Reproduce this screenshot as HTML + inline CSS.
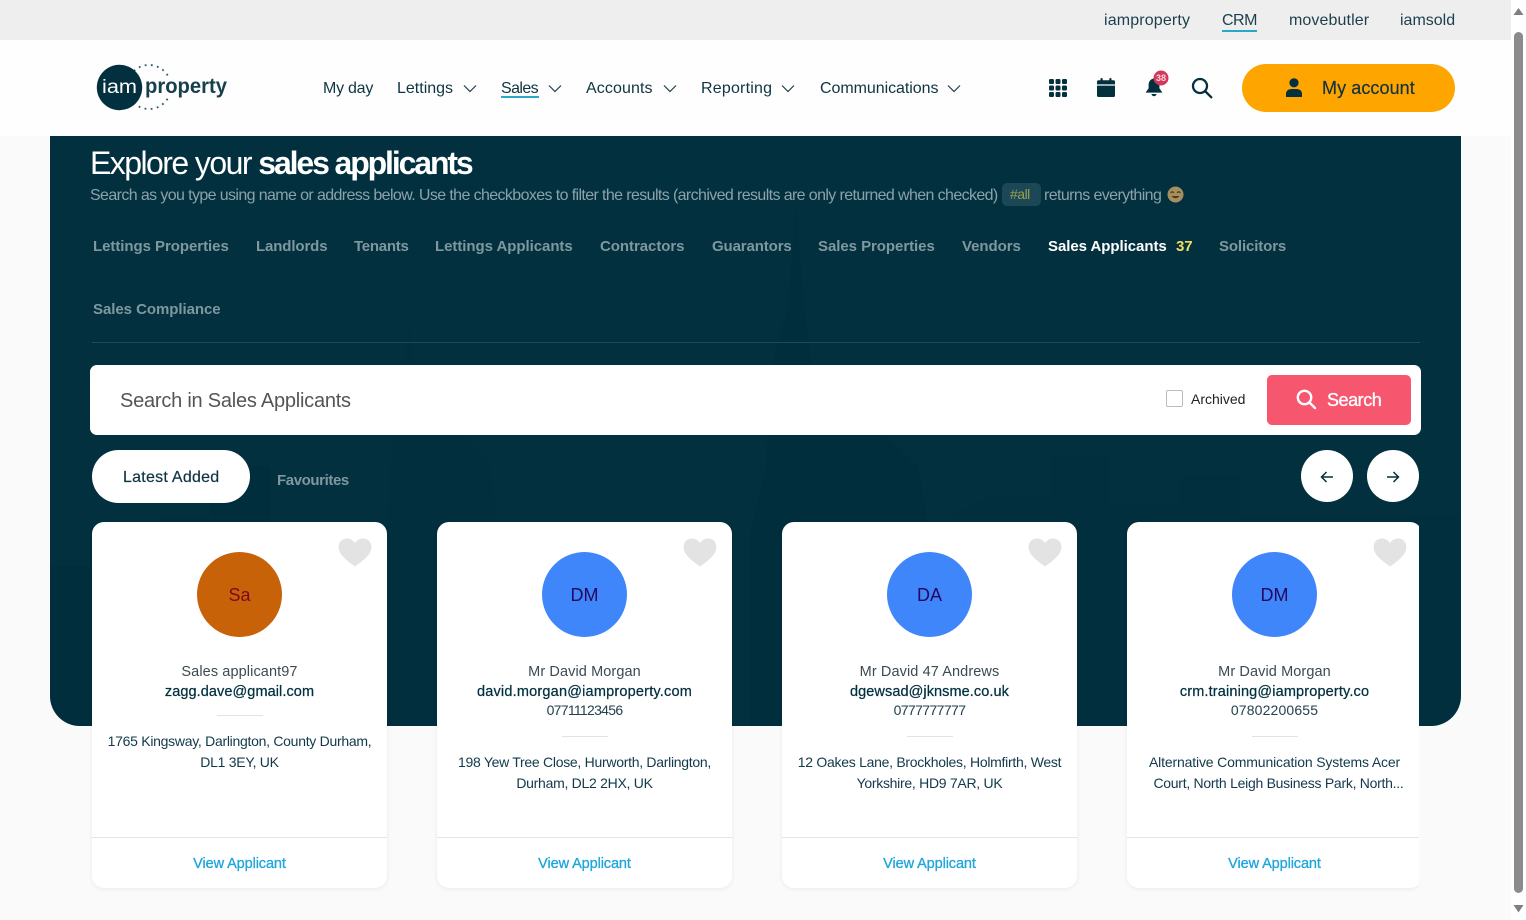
<!DOCTYPE html>
<html lang="en">
<head>
<meta charset="utf-8">
<title>Explore your sales applicants</title>
<style>
*{box-sizing:border-box}
html,body{margin:0;padding:0;width:1526px;height:920px;overflow:hidden;background:#fafafa}
body{font-family:"Liberation Sans",Arial,sans-serif;color:#02303f;position:relative}
.a{position:absolute;white-space:nowrap}
#top{left:0;top:0;width:1511px;height:40px;background:#eeeeee}
#head{left:0;top:40px;width:1511px;height:96px;background:#fefefe}
.t{top:11px;font-size:16px;line-height:20px;color:#1d3f4c}
.n{top:79px;font-size:16px;line-height:20px;color:#0f3542}
.chev{position:absolute;top:84px;width:14px;height:9px}
#panel{left:50px;top:136px;width:1411px;height:590px;background:#02303f;border-radius:0 0 30px 30px;overflow:hidden}
.tab{font-size:15px;line-height:20px;font-weight:700;color:#7f989f;letter-spacing:-.05px}
.card{position:absolute;top:522px;width:295px;height:366px;background:#fff;border-radius:12px;box-shadow:0 1px 5px rgba(0,0,0,.07);overflow:hidden;text-align:center}
.ava{position:absolute;left:105px;top:31px;width:85px;height:85px;border-radius:50%;font-size:18px;line-height:85px;text-align:center}
.avab{position:absolute;left:105px;top:30px;width:85px;height:85px;border-radius:50%}
.l{position:absolute;left:0;width:295px;font-size:14.5px;line-height:19px;white-space:nowrap}
.nm{top:141px;color:#3c4a52;letter-spacing:.1px}
.em{top:160.5px;color:#02303f;-webkit-text-stroke:.25px #02303f;letter-spacing:.08px}
.ph{top:179px;color:#23414d;font-size:14px}
.sep{position:absolute;left:125px;width:46px;height:1px;background:#e2e2e2}
.ad{font-size:14px;line-height:21px;color:#12394a;letter-spacing:-.28px}
.foot{position:absolute;left:0;top:315px;width:295px;height:1px;background:#e4e4e4}
.view{position:absolute;left:0;top:332px;width:295px;font-size:14.5px;line-height:20px;color:#1ea5dc;-webkit-text-stroke:.3px #1ea5dc;letter-spacing:-.1px}
.heart{position:absolute;left:246px;top:16px;width:34px;height:29px}
.circ{position:absolute;top:450px;width:52px;height:52px;border-radius:50%;background:#fff}
</style>
</head>
<body>
<div class="a" id="top"></div>
<div class="a" id="head"></div>

<span class="a t" style="left:1104px;letter-spacing:.15px">iamproperty</span>
<span class="a t" style="left:1222px;letter-spacing:-.5px">CRM</span>
<div class="a" style="left:1222px;top:30px;width:35px;height:2px;background:#2aa9c6"></div>
<span class="a t" style="left:1289px;letter-spacing:.1px">movebutler</span>
<span class="a t" style="left:1400px">iamsold</span>

<!-- logo -->
<svg class="a" style="left:90px;top:58px" width="145" height="58" viewBox="0 0 145 58">
  <circle cx="59" cy="29" r="22" fill="none" stroke="#2f5a67" stroke-width="1.8" stroke-dasharray="1.8 4.4"/>
  <rect x="54" y="20" width="85" height="20" fill="#fefefe"/>
  <circle cx="29.5" cy="29.5" r="22.7" fill="#02303f"/>
  <text x="12" y="35" font-family="Liberation Sans" font-size="19" fill="#fff" textLength="35" lengthAdjust="spacingAndGlyphs">iam</text>
  <text x="55" y="35" font-family="Liberation Sans" font-size="21" font-weight="700" fill="#17404d" textLength="82" lengthAdjust="spacingAndGlyphs">property</text>
</svg>

<span class="a n" style="left:323px;letter-spacing:-.25px">My day</span>
<span class="a n" style="left:397px">Lettings</span>
<svg class="chev" style="left:463px" viewBox="0 0 14 9"><path d="M1 1.5 7 7.5 13 1.5" fill="none" stroke="#1d3f4c" stroke-width="1.2"/></svg>
<span class="a n" style="left:501px;letter-spacing:-.6px">Sales</span>
<div class="a" style="left:501px;top:96px;width:38px;height:2px;background:#2aa9c6"></div>
<svg class="chev" style="left:548px" viewBox="0 0 14 9"><path d="M1 1.5 7 7.5 13 1.5" fill="none" stroke="#1d3f4c" stroke-width="1.2"/></svg>
<span class="a n" style="left:586px;letter-spacing:.1px">Accounts</span>
<svg class="chev" style="left:663px" viewBox="0 0 14 9"><path d="M1 1.5 7 7.5 13 1.5" fill="none" stroke="#1d3f4c" stroke-width="1.2"/></svg>
<span class="a n" style="left:701px;letter-spacing:.2px">Reporting</span>
<svg class="chev" style="left:781px" viewBox="0 0 14 9"><path d="M1 1.5 7 7.5 13 1.5" fill="none" stroke="#1d3f4c" stroke-width="1.2"/></svg>
<span class="a n" style="left:820px;letter-spacing:-.05px">Communications</span>
<svg class="chev" style="left:947px" viewBox="0 0 14 9"><path d="M1 1.5 7 7.5 13 1.5" fill="none" stroke="#1d3f4c" stroke-width="1.2"/></svg>

<!-- header icons -->
<svg class="a" style="left:1049px;top:79px" width="18" height="18" viewBox="0 0 18 18" fill="#02303f">
  <rect x="0" y="0" width="5" height="5" rx="1.4"/><rect x="6.5" y="0" width="5" height="5" rx="1.4"/><rect x="13" y="0" width="5" height="5" rx="1.4"/>
  <rect x="0" y="6.5" width="5" height="5" rx="1.4"/><rect x="6.5" y="6.5" width="5" height="5" rx="1.4"/><rect x="13" y="6.5" width="5" height="5" rx="1.4"/>
  <rect x="0" y="13" width="5" height="5" rx="1.4"/><rect x="6.5" y="13" width="5" height="5" rx="1.4"/><rect x="13" y="13" width="5" height="5" rx="1.4"/>
</svg>
<svg class="a" style="left:1097px;top:78px" width="18" height="20" viewBox="0 0 18 20" fill="#02303f">
  <rect x="3.5" y="0" width="2.2" height="4" rx="1"/><rect x="12.3" y="0" width="2.2" height="4" rx="1"/>
  <path d="M1.5 2.2H16.5A1.5 1.5 0 0 1 18 3.7V6.4H0V3.7A1.5 1.5 0 0 1 1.5 2.2Z"/>
  <path d="M0 7.6H18V17.5A1.5 1.5 0 0 1 16.5 19H1.5A1.5 1.5 0 0 1 0 17.5Z"/>
</svg>
<svg class="a" style="left:1143px;top:70px" width="28" height="28" viewBox="0 0 28 28">
  <path d="M11 8.5C7.3 9 5.6 11.8 5.6 15V18.2L2.6 22.6H19.4L16.4 18.2V15C16.4 11.8 14.7 9 11 8.5Z" fill="#02303f"/>
  <path d="M8.5 24H13.5A2.5 2.2 0 0 1 8.5 24Z" fill="#02303f"/>
  <circle cx="18" cy="8" r="7.5" fill="#d4375b"/>
  <text x="18" y="11" font-family="Liberation Sans" font-size="9" font-weight="700" fill="#f6d7de" text-anchor="middle">38</text>
</svg>
<svg class="a" style="left:1191px;top:77px" width="22" height="22" viewBox="0 0 22 22" fill="none" stroke="#02303f" stroke-width="2.3">
  <circle cx="9" cy="9" r="7"/><path d="M14 14 20.3 20.3" stroke-linecap="round"/>
</svg>

<!-- account -->
<div class="a" style="left:1242px;top:64px;width:213px;height:48px;border-radius:24px;background:#fea500"></div>
<svg class="a" style="left:1285px;top:78px" width="18" height="20" viewBox="0 0 18 20" fill="#02303f">
  <circle cx="9" cy="4.8" r="4.6"/><path d="M1 19V16C1 12.8 3.6 11 6.5 11H11.5C14.4 11 17 12.8 17 16V19Z"/>
</svg>
<span class="a" style="left:1322px;top:78px;font-size:18px;line-height:20px;color:#12333d;-webkit-text-stroke:.2px #12333d;letter-spacing:.08px">My account</span>

<!-- panel -->
<div class="a" id="panel">
<svg style="position:absolute;left:0;top:0" width="1411" height="590" viewBox="0 0 1411 590" fill="#012b39">
  <path d="M746 70 L738 170 L722 230 L716 330 L700 400 L700 590 L890 590 L880 400 L868 330 L762 230 L754 170Z" opacity=".3"/>
  <path d="M358 180 L354 240 L340 330 L330 590 L470 590 L440 330 L366 240Z" opacity=".25"/>
  <path d="M0 430H40V400H60V430H110V380H160V330H220V590H0Z" opacity=".35"/>
  <path d="M940 360H1000V320H1060V370H1130V340H1190V380H1411V590H900V380Z" opacity=".2"/>
</svg>
</div>

<div class="a" style="left:90px;top:145px;font-size:32px;line-height:36px;color:#fff;letter-spacing:-1.56px">Explore your <b style="letter-spacing:-2.12px">sales applicants</b></div>
<div class="a" style="left:90px;top:186px;font-size:16px;line-height:20px;color:#8ba2a9;letter-spacing:-.615px">Search as you type using name or address below. Use the checkboxes to filter the results (archived results are only returned when checked)</div>
<div class="a" style="left:1002px;top:183px;width:39px;height:23px;border-radius:5px;background:#1b4756"></div>
<span class="a" style="left:1010px;top:184px;font-size:14px;line-height:20px;color:#98a04f;letter-spacing:-.5px">#all</span>
<span class="a" style="left:1044px;top:186px;font-size:16px;line-height:20px;color:#8ba2a9;letter-spacing:-.6px">returns everything</span>
<svg class="a" style="left:1167px;top:186px" width="17" height="17" viewBox="0 0 17 17">
  <circle cx="8.5" cy="8.5" r="8" fill="#a68f5c"/><path d="M3.5 6.8Q5.3 5 7 6.8M10 6.8Q11.7 5 13.5 6.8" fill="none" stroke="#3b3a2c" stroke-width="1.2"/><path d="M4.5 10Q8.5 14.5 12.5 10Z" fill="#4c3a27"/>
</svg>

<span class="a tab" style="left:93px;top:237px">Lettings Properties</span>
<span class="a tab" style="left:256px;top:237px;letter-spacing:-.12px">Landlords</span>
<span class="a tab" style="left:354px;top:237px;letter-spacing:-.25px">Tenants</span>
<span class="a tab" style="left:435px;top:237px">Lettings Applicants</span>
<span class="a tab" style="left:600px;top:237px">Contractors</span>
<span class="a tab" style="left:712px;top:237px;letter-spacing:-.12px">Guarantors</span>
<span class="a tab" style="left:818px;top:237px">Sales Properties</span>
<span class="a tab" style="left:962px;top:237px">Vendors</span>
<span class="a tab" style="left:1048px;top:237px;color:#fff">Sales Applicants</span>
<span class="a tab" style="left:1176px;top:237px;color:#f4dc62">37</span>
<span class="a tab" style="left:1219px;top:237px;letter-spacing:-.12px">Solicitors</span>
<span class="a tab" style="left:93px;top:300px">Sales Compliance</span>
<div class="a" style="left:92px;top:342px;width:1328px;height:1px;background:#1d4b58"></div>

<!-- search -->
<div class="a" style="left:90px;top:365px;width:1331px;height:70px;background:#fff;border-radius:7px"></div>
<span class="a" style="left:120px;top:389px;font-size:20px;line-height:24px;color:#555;letter-spacing:-.23px">Search in Sales Applicants</span>
<div class="a" style="left:1166px;top:390px;width:17px;height:17px;border:1px solid #bdbdbd;border-radius:2px;background:#fff"></div>
<span class="a" style="left:1191px;top:389px;font-size:14px;line-height:20px;color:#222">Archived</span>
<div class="a" style="left:1267px;top:375px;width:144px;height:50px;border-radius:5px;background:#f7566f"></div>
<svg class="a" style="left:1296px;top:389px" width="21" height="21" viewBox="0 0 21 21" fill="none" stroke="#fff" stroke-width="2.4">
  <circle cx="8.5" cy="8.5" r="6.7"/><path d="M13.3 13.3 19 19" stroke-linecap="round"/>
</svg>
<span class="a" style="left:1327px;top:390px;font-size:18px;line-height:20px;color:#fff;-webkit-text-stroke:.3px #fff;letter-spacing:-.45px">Search</span>

<!-- sub tabs -->
<div class="a" style="left:92px;top:450px;width:158px;height:53px;border-radius:27px;background:#fff"></div>
<span class="a" style="left:123px;top:468px;font-size:16px;line-height:20px;color:#0f3542;-webkit-text-stroke:.2px #0f3542;letter-spacing:.25px">Latest Added</span>
<span class="a tab" style="left:277px;top:471px;letter-spacing:-.4px">Favourites</span>
<div class="circ" style="left:1301px"></div>
<div class="circ" style="left:1367px"></div>
<svg class="a" style="left:1320px;top:470px" width="14" height="14" viewBox="0 0 14 14" fill="none" stroke="#02303f" stroke-width="1.5"><path d="M13 7H1.5M6.5 2 1.5 7 6.5 12"/></svg>
<svg class="a" style="left:1386px;top:470px" width="14" height="14" viewBox="0 0 14 14" fill="none" stroke="#02303f" stroke-width="1.5"><path d="M1 7H12.5M7.5 2 12.5 7 7.5 12"/></svg>

<!-- cards clip -->
<div class="a" style="left:0;top:0;width:1419px;height:920px;overflow:hidden">
  <div class="card" style="left:92px">
    <svg class="heart" viewBox="0 0 36 31"><path d="M18 30.5C6 22 .5 16.5 .5 9.5 .5 4 4.5 .5 9.5 .5 13 .5 16 2.3 18 5.3 20 2.3 23 .5 26.5 .5 31.5 .5 35.5 4 35.5 9.5 35.5 16.5 30 22 18 30.5Z" fill="#e3e3e3"/></svg>
    <div class="avab" style="background:#c86208"></div>
    <div class="ava" style="color:#7a0b1e">Sa</div>
    <div class="l nm">Sales applicant97</div>
    <div class="l em">zagg.dave@gmail.com</div>
    <div class="sep" style="top:193px"></div>
    <div class="l ad" style="top:209px">1765 Kingsway, Darlington, County Durham,<br>DL1 3EY, UK</div>
    <div class="foot"></div>
    <div class="view">View Applicant</div>
  </div>
  <div class="card" style="left:437px">
    <svg class="heart" viewBox="0 0 36 31"><path d="M18 30.5C6 22 .5 16.5 .5 9.5 .5 4 4.5 .5 9.5 .5 13 .5 16 2.3 18 5.3 20 2.3 23 .5 26.5 .5 31.5 .5 35.5 4 35.5 9.5 35.5 16.5 30 22 18 30.5Z" fill="#e3e3e3"/></svg>
    <div class="avab" style="background:#4086fb"></div>
    <div class="ava" style="color:#25085f">DM</div>
    <div class="l nm">Mr David Morgan</div>
    <div class="l em" style="letter-spacing:.2px">david.morgan@iamproperty.com</div>
    <div class="l ph" style="letter-spacing:-.7px">07711123456</div>
    <div class="sep" style="top:214px"></div>
    <div class="l ad" style="top:230px">198 Yew Tree Close, Hurworth, Darlington,<br>Durham, DL2 2HX, UK</div>
    <div class="foot"></div>
    <div class="view">View Applicant</div>
  </div>
  <div class="card" style="left:782px">
    <svg class="heart" viewBox="0 0 36 31"><path d="M18 30.5C6 22 .5 16.5 .5 9.5 .5 4 4.5 .5 9.5 .5 13 .5 16 2.3 18 5.3 20 2.3 23 .5 26.5 .5 31.5 .5 35.5 4 35.5 9.5 35.5 16.5 30 22 18 30.5Z" fill="#e3e3e3"/></svg>
    <div class="avab" style="background:#4086fb"></div>
    <div class="ava" style="color:#25085f">DA</div>
    <div class="l nm">Mr David 47 Andrews</div>
    <div class="l em">dgewsad@jknsme.co.uk</div>
    <div class="l ph" style="letter-spacing:-.6px">0777777777</div>
    <div class="sep" style="top:214px"></div>
    <div class="l ad" style="top:230px">12 Oakes Lane, Brockholes, Holmfirth, West<br>Yorkshire, HD9 7AR, UK</div>
    <div class="foot"></div>
    <div class="view">View Applicant</div>
  </div>
  <div class="card" style="left:1127px">
    <svg class="heart" viewBox="0 0 36 31"><path d="M18 30.5C6 22 .5 16.5 .5 9.5 .5 4 4.5 .5 9.5 .5 13 .5 16 2.3 18 5.3 20 2.3 23 .5 26.5 .5 31.5 .5 35.5 4 35.5 9.5 35.5 16.5 30 22 18 30.5Z" fill="#e3e3e3"/></svg>
    <div class="avab" style="background:#4086fb"></div>
    <div class="ava" style="color:#25085f">DM</div>
    <div class="l nm">Mr David Morgan</div>
    <div class="l em" style="letter-spacing:.15px">crm.training@iamproperty.co</div>
    <div class="l ph" style="letter-spacing:.15px">07802200655</div>
    <div class="sep" style="top:214px"></div>
    <div class="l ad" style="top:230px;letter-spacing:-.15px">Alternative Communication Systems Acer<br><span style="position:relative;left:4px;letter-spacing:-.27px">Court, North Leigh Business Park, North...</span></div>
    <div class="foot"></div>
    <div class="view">View Applicant</div>
  </div>
</div>

<!-- scrollbar -->
<div class="a" style="left:1511px;top:0;width:15px;height:920px;background:#fff"></div>
<svg class="a" style="left:1511px;top:0" width="15" height="920" viewBox="0 0 15 920">
  <path d="M2.5 15 7.5 8 12.5 15Z" fill="#7f7f7f"/>
  <rect x="3" y="32" width="9" height="861" rx="4.5" fill="#8b8b8b"/>
  <path d="M2.5 905 7.5 912.5 12.5 905Z" fill="#7f7f7f"/>
</svg>
</body>
</html>
